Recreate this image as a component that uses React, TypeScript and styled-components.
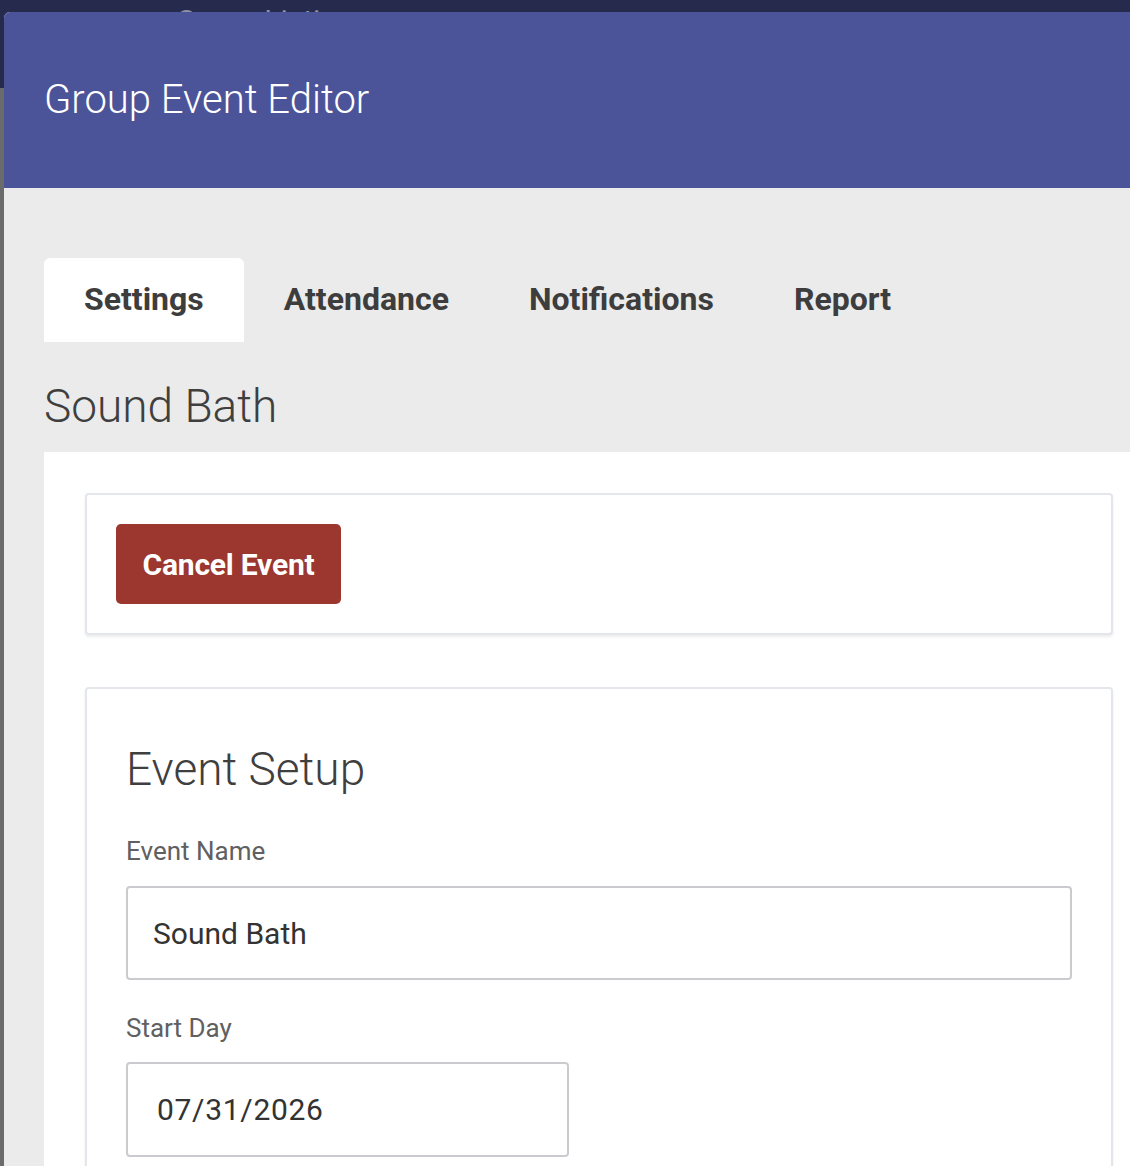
import React from "react";
import styled, { createGlobalStyle } from "styled-components";

const GlobalStyle = createGlobalStyle`
  html, body { margin: 0; padding: 0; overflow: hidden; }
  body { background: #6b6b6b; font-family: Roboto, "Noto Sans", "Liberation Sans", sans-serif; }
  * { box-sizing: border-box; }
`;

const Backdrop = styled.div`
  position: relative;
  width: 1130px;
  height: 1166px;
  overflow: hidden;
  background: #6b6b6b;
`;

const TopBar = styled.div`
  height: 88px;
  background: #262a4d;
  padding: 6px 0 0 176px;
  color: #8e90a3;
  font-size: 30px;
  line-height: 30px;
`;

const Modal = styled.div`
  position: absolute;
  left: 4px;
  top: 12px;
  width: 1190px;
  height: 1200px;
  background: #ebebeb;
  border-radius: 6px 0 0 0;
  overflow: hidden;
`;

const Header = styled.header`
  height: 176px;
  background: #4c5499;
  display: flex;
  align-items: center;
  padding-left: 40px;
`;

const Title = styled.h1`
  margin: 0;
  font-weight: 300;
  font-size: 40px;
  line-height: 40px;
  color: #ffffff;
`;

const Body = styled.div`
  padding: 70px 40px 0;
`;

const Tabs = styled.nav`
  display: flex;
  height: 84px;
`;

const Tab = styled.div<{ $active?: boolean }>`
  padding: 0 40px 2px;
  display: flex;
  align-items: center;
  font-weight: 700;
  font-size: 32px;
  color: #3d3d3d;
  background: ${(p) => (p.$active ? "#ffffff" : "transparent")};
  border-radius: 6px 6px 0 0;
`;

const PageTitle = styled.h2`
  margin: 0;
  height: 110px;
  padding-top: 41px;
  font-weight: 300;
  font-size: 46px;
  line-height: 46px;
  color: #3f3f3f;
`;

const Panel = styled.section`
  background: #ffffff;
  padding: 41px;
  min-height: 900px;
  display: flex;
  flex-direction: column;
  gap: 52px;
`;

const Card = styled.div<{ $pad: string }>`
  background: #ffffff;
  border: 2px solid #e3e6ea;
  border-radius: 4px;
  box-shadow: 0 2px 3px rgba(0, 0, 0, 0.08);
  padding: ${(p) => p.$pad};
`;

const DangerButton = styled.button`
  width: 225px;
  height: 80px;
  border: none;
  border-radius: 5px;
  background: #9b372e;
  color: #ffffff;
  font-family: inherit;
  font-weight: 700;
  font-size: 30px;
  letter-spacing: -0.2px;
  cursor: pointer;
`;

const SectionTitle = styled.h3`
  margin: 57px 0 0;
  font-weight: 300;
  font-size: 46px;
  line-height: 46px;
  color: #3f3f3f;
`;

const Field = styled.label<{ $top: number; $gap: number }>`
  display: flex;
  flex-direction: column;
  gap: ${(p) => p.$gap}px;
  margin-top: ${(p) => p.$top}px;
`;

const LabelText = styled.span`
  font-size: 26px;
  line-height: 25px;
  color: #606060;
`;

const TextInput = styled.input<{ $w?: string; $h: number; $fs: number; $pl: number; $ls?: number }>`
  width: ${(p) => p.$w ?? "100%"};
  height: ${(p) => p.$h}px;
  border: 2px solid #cbcbcf;
  border-radius: 4px;
  padding: 0 0 0 ${(p) => p.$pl}px;
  font-family: inherit;
  font-size: ${(p) => p.$fs}px;
  letter-spacing: ${(p) => p.$ls ?? 0}px;
  color: #333333;
  background: #ffffff;
  outline: none;
`;

export default function App() {
  return (
    <>
      <GlobalStyle />
      <Backdrop>
        <TopBar>Group Listing</TopBar>
        <Modal>
          <Header>
            <Title>Group Event Editor</Title>
          </Header>
          <Body>
            <Tabs>
              <Tab $active>Settings</Tab>
              <Tab>Attendance</Tab>
              <Tab>Notifications</Tab>
              <Tab>Report</Tab>
            </Tabs>
            <PageTitle>Sound Bath</PageTitle>
            <Panel>
              <Card $pad="29px">
                <DangerButton>Cancel Event</DangerButton>
              </Card>
              <Card $pad="0 39px 40px">
                <SectionTitle>Event Setup</SectionTitle>
                <Field $top={47} $gap={22}>
                  <LabelText>Event Name</LabelText>
                  <TextInput $h={94} $fs={30} $pl={25} defaultValue="Sound Bath" />
                </Field>
                <Field $top={36} $gap={21}>
                  <LabelText>Start Day</LabelText>
                  <TextInput $w="443px" $h={95} $fs={30} $pl={29} $ls={0.7} defaultValue="07/31/2026" />
                </Field>
              </Card>
            </Panel>
          </Body>
        </Modal>
      </Backdrop>
    </>
  );
}
